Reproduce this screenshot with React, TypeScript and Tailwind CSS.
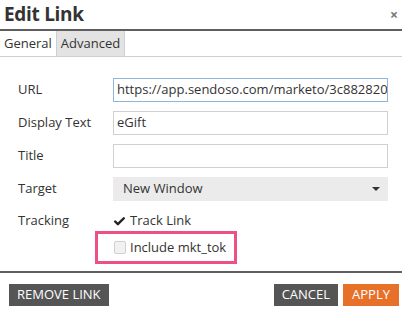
import { Check } from 'lucide-react';

const rows = [
  { label: 'URL', value: 'https://app.sendoso.com/marketo/3c882820', focus: true },
  { label: 'Display Text', value: 'eGift', focus: false },
  { label: 'Title', value: '', focus: false },
];

export default function App() {
  return (
    <div className="w-[402px] h-[313px] bg-white text-[#333] font-['Open_Sans',sans-serif] overflow-hidden">
      {/* header */}
      <div className="h-[31px] flex items-center justify-between pl-[4px] pr-[4px] border-b-2 border-[#5f5f5f]">
        <span className="text-[19px] font-bold leading-none tracking-[-0.3px]">Edit Link</span>
        <span className="text-[14px] font-bold text-[#777] leading-none">×</span>
      </div>

      {/* tabs */}
      <div className="flex h-[26px] border-b border-[#cfcfcf] text-[13px]">
        <div className="px-[4px] flex items-center">General</div>
        <div className="px-[4px] flex items-center bg-[#e3e3e3] border-x border-[#cfcfcf]">Advanced</div>
      </div>

      {/* form */}
      <div className="pt-[21px] pl-[18px] pr-[14px] flex flex-col gap-[9px] text-[13px]">
        {rows.map((r) => (
          <div key={r.label} className="flex items-center">
            <div className="w-[95px] shrink-0">{r.label}</div>
            <div
              className={
                r.focus
                  ? 'flex-1 h-[24px] border border-[#8fb6d8] px-[3px] flex items-center overflow-hidden whitespace-nowrap'
                  : 'flex-1 h-[24px] border border-[#d0d0d0] px-[3px] flex items-center overflow-hidden whitespace-nowrap'
              }
            >
              {r.value}
            </div>
          </div>
        ))}
        <div className="flex items-center">
          <div className="w-[95px] shrink-0">Target</div>
          <div className="flex-1 h-[24px] bg-[#ebebeb] pl-[10px] pr-[8px] flex items-center justify-between">
            <span>New Window</span>
            <span className="w-0 h-0 border-x-[4px] border-x-transparent border-t-[4px] border-t-[#333]" />
          </div>
        </div>
      </div>

      {/* tracking */}
      <div className="pl-[18px] pt-[10px] text-[13px]">
        <div className="flex items-center h-[20px]">
          <div className="w-[95px] shrink-0">Tracking</div>
          <Check className="w-[13px] h-[13px] text-[#222]" strokeWidth={4.5} />
          <span className="ml-[4px]">Track Link</span>
        </div>
        <div className="ml-[77px] w-[142px] h-[33px] border-[3px] border-[#ec5087] flex items-center pl-[16px]">
          <span className="w-[12px] h-[13px] border border-[#cfcfcf] bg-[#f1f1f1] rounded-[2px]" />
          <span className="ml-[4px]">Include mkt_tok</span>
        </div>
      </div>

      {/* footer */}
      <div className="mt-[7px] border-t-2 border-[#5f5f5f] pt-[11px] pl-[9px] pr-[3px] flex justify-between text-[13px] text-white">
        <div className="h-[22px] px-[8px] bg-[#555] flex items-center">REMOVE LINK</div>
        <div className="flex gap-[5px]">
          <div className="h-[22px] px-[8px] bg-[#555] flex items-center">CANCEL</div>
          <div className="h-[22px] px-[9px] bg-[#e8712a] flex items-center">APPLY</div>
        </div>
      </div>
    </div>
  );
}
